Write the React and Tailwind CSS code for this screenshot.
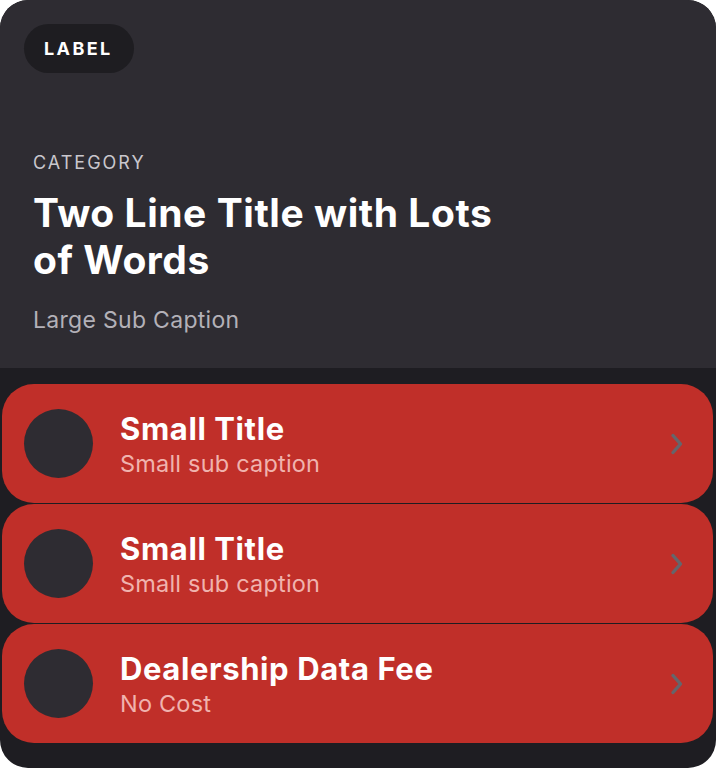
import React from "react";

function Chevron() {
  return (
    <svg width="16" height="22" viewBox="0 0 16 22" fill="none">
      <path d="M4 2.5 L11.5 11 L4 19.5" stroke="#66656b" strokeWidth="3.4" strokeLinecap="round" strokeLinejoin="round" />
    </svg>
  );
}

function Row({ title, sub }) {
  return (
    <div className="h-[119px] ml-[2px] mr-[3px] rounded-[32px] bg-[#c02f29] flex items-center pl-[22px] pr-[28px]">
      <div className="w-[69px] h-[69px] rounded-full bg-[#2e2c32] shrink-0" />
      <div className="ml-[27px] flex-1 flex flex-col pt-[2px]">
        <div className="text-[31px] leading-[36px] font-bold tracking-[0.6px] text-white">{title}</div>
        <div className="mt-[2px] text-[23.5px] leading-[30px] tracking-[0.2px] text-[#f0b3ae]">{sub}</div>
      </div>
      <Chevron />
    </div>
  );
}

export default function App() {
  return (
    <div className="w-[716px] h-[768px] bg-white" style={{ fontFamily: "Inter, 'Noto Sans', sans-serif" }}>
      <div className="w-[716px] h-[768px] rounded-[28px] bg-[#1e1d22] overflow-hidden flex flex-col">
        <div className="h-[368px] bg-[#2e2c32] rounded-t-[28px] pt-[24px] px-[24px] flex flex-col">
          <div className="self-start h-[49px] pl-[20px] pr-[21px] rounded-full bg-[#1e1d21] flex items-center">
            <span className="text-[18px] font-bold tracking-[2.4px] text-white">LABEL</span>
          </div>
          <div className="pl-[9px] mt-[78px]">
            <div className="text-[18px] leading-[24px] tracking-[2px] text-[#c9c7cd]">CATEGORY</div>
            <div className="mt-[14px] text-[39px] leading-[47px] font-bold tracking-[0.55px] text-white w-[480px]">
              Two Line Title with Lots of Words
            </div>
            <div className="mt-[23px] text-[23px] leading-[28px] tracking-[0.3px] text-[#b3b1b8]">Large Sub Caption</div>
          </div>
        </div>
        <div className="pt-[16px] flex flex-col gap-[1px]">
          <Row title="Small Title" sub="Small sub caption" />
          <Row title="Small Title" sub="Small sub caption" />
          <Row title="Dealership Data Fee" sub="No Cost" />
        </div>
      </div>
    </div>
  );
}
